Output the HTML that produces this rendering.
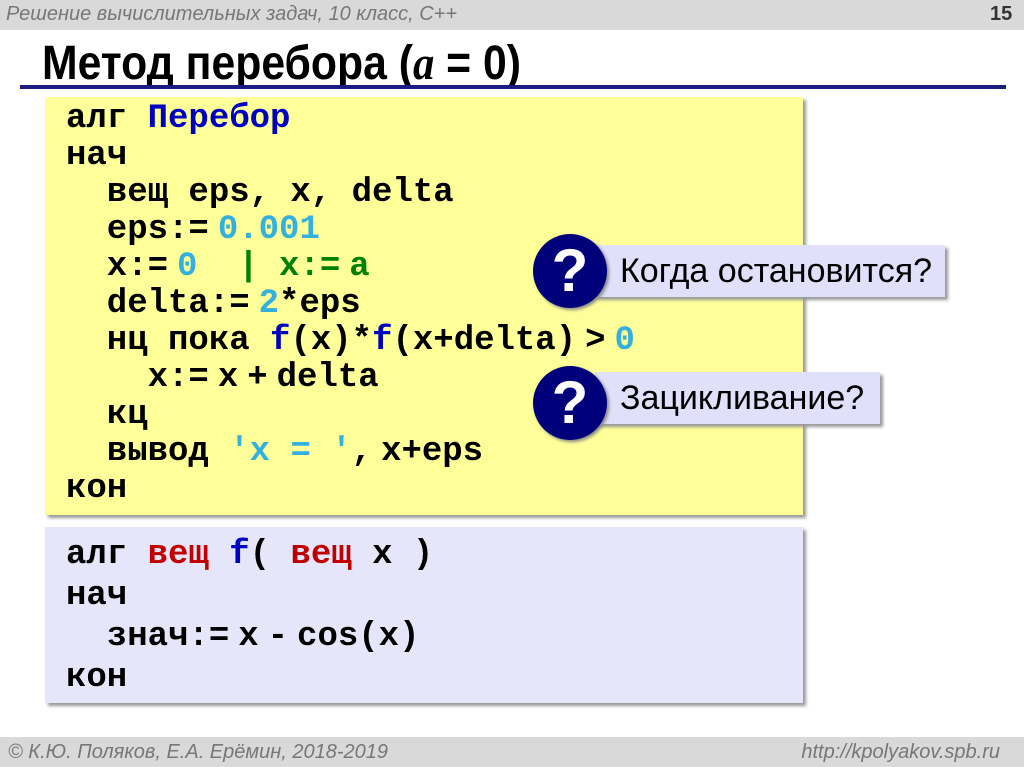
<!DOCTYPE html>
<html><head><meta charset="utf-8"><style>
body{margin:0;width:1024px;height:767px;position:relative;background:#fff;overflow:hidden;font-family:"Liberation Sans",sans-serif}
.hdr{position:absolute;left:0;top:0;width:1024px;height:30px;background:#d9d9d9}
.ftr{position:absolute;left:0;top:737px;width:1024px;height:30px;background:#d9d9d9}
.it{position:absolute;font-style:italic;color:#777;font-size:20px}
.title{position:absolute;left:42px;top:36px;font-size:48px;font-weight:bold;transform:scaleX(0.89);transform-origin:left;white-space:nowrap}
.line{position:absolute;left:20px;top:85px;width:986px;height:4px;background:#1c1c80}
.box{position:absolute;left:45px;width:758px;box-shadow:3px 3px 3px #999}
.c{position:absolute;font-family:"Liberation Mono",monospace;font-weight:bold;font-size:34px;white-space:pre;line-height:37px}
.t{display:inline-block;width:9px}
.b{color:#0000c0}.n{color:#33b0dd}.g{color:#008000}.r{color:#c00000}
.q{position:absolute;width:74px;height:74px;border-radius:50%;background:#00007a;color:#fff;font-weight:bold;font-size:60px;text-align:center;line-height:74px;box-shadow:2px 2px 3px #888}
.bub{position:absolute;background:#e0e0fa;font-size:34px;line-height:52px;padding-left:25px;box-shadow:3px 3px 3px #999;height:52px;white-space:nowrap}
</style></head><body>
<div class="hdr"></div>
<div class="it" style="left:6px;top:3px">Решение  вычислительных задач, 10 класс, С++</div>
<div style="position:absolute;left:990px;top:3px;font-weight:bold;font-size:20px;color:#333">15</div>
<div class="title">Метод перебора (<span style="font-family:'Liberation Serif',serif;font-style:italic">a</span> = 0)</div>
<div class="line"></div>
<div class="box" style="top:97px;height:418px;background:#ffff99"></div>
<div class="box" style="top:527px;height:176px;background:#e6e6fa"></div>
<div class="c" style="left:66px;top:101px">алг <span class="b">Перебор</span>
нач
  вещ eps, x, delta
  eps:=<span class="t"></span><span class="n">0.001</span>
  x:=<span class="t"></span><span class="n">0</span>  <span class="g">| x:=<span class="t"></span>a</span>
  delta:=<span class="t"></span><span class="n">2</span>*eps
  нц пока <span class="b">f</span>(x)*<span class="b">f</span>(x+delta)<span class="t"></span>&gt;<span class="t"></span><span class="n">0</span>
    x:=<span class="t"></span>x<span class="t"></span>+<span class="t"></span>delta
  кц
  вывод <span class="n">'x = '</span>,<span class="t"></span>x+eps
кон</div>
<div class="c" style="left:66px;top:535px;line-height:41px">алг <span class="r">вещ</span> <span class="b">f</span>( <span class="r">вещ</span> x )
нач
  знач:=<span class="t"></span>x<span class="t"></span>-<span class="t"></span>cos(x)
кон</div>
<div class="bub" style="left:595px;top:245px;width:325px">Когда остановится?</div>
<div class="q" style="left:533px;top:234px">?</div>
<div class="bub" style="left:595px;top:372px;width:260px">Зацикливание?</div>
<div class="q" style="left:533px;top:366px">?</div>
<div class="ftr"></div>
<div class="it" style="left:8px;top:741px">© К.Ю. Поляков, Е.А. Ерёмин, 2018-2019</div>
<div class="it" style="right:24px;top:741px">http://kpolyakov.spb.ru</div>
</body></html>
